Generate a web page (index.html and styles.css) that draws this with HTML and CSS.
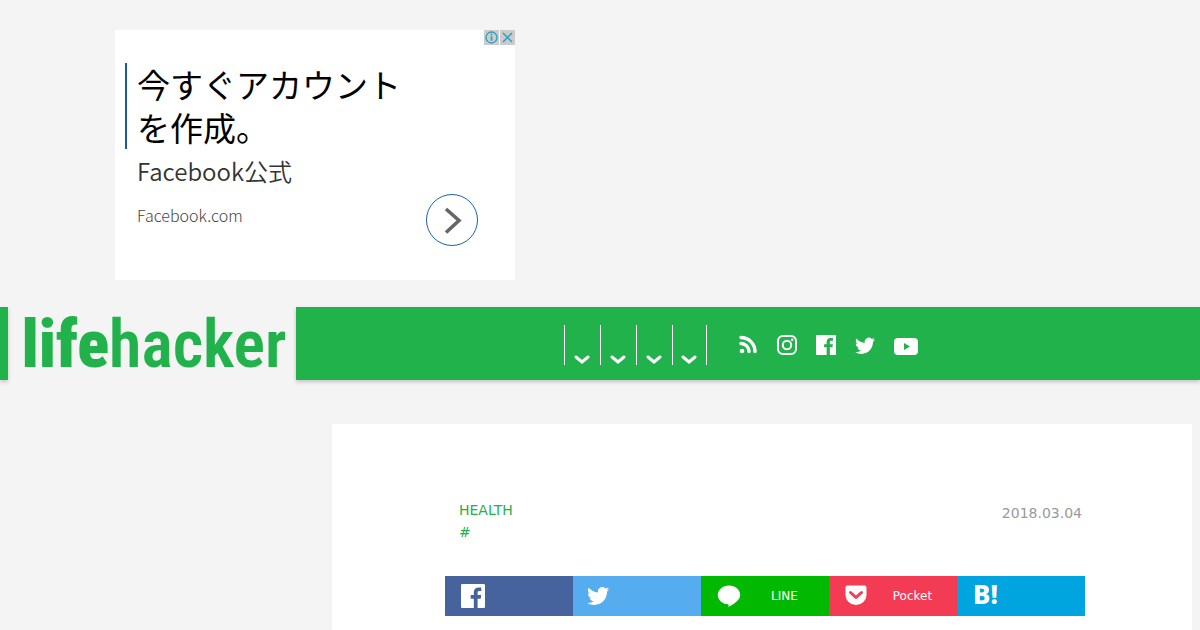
FILE: index.html
```html
<!DOCTYPE html>
<html lang="ja">
<head>
    <meta charset="UTF-8">
    <meta name="viewport" content="width=device-width, initial-scale=1.0">
    <title>lifehacker</title>
    <link rel="stylesheet" href="styles.css">
</head>

<body>
    <aside class="ad">
        <div class="ad-choices">
            <button type="button" aria-label="広告について">
                <svg width="15" height="15" viewBox="0 0 15 15" fill="none" stroke="#2a9fbf">
                    <circle cx="7.5" cy="7.5" r="5.5" stroke-width="1.3"/>
                    <path d="M7.5 6.3v4.5M7.5 3.8v1.5" stroke-width="1.6"/>
                </svg>
            </button>
            <button type="button" aria-label="広告を閉じる">
                <svg width="15" height="15" viewBox="0 0 15 15" fill="none" stroke="#2a9fbf" stroke-width="1.5">
                    <path d="M3 3l9 9M12 3l-9 9"/>
                </svg>
            </button>
        </div>
        <h2 class="ad-title">今すぐアカウント<br>を作成。</h2>
        <p class="ad-name">Facebook公式</p>
        <div class="ad-bottom">
            <p class="ad-url">Facebook.com</p>
            <a href="#" class="ad-arrow" aria-label="開く">
                <svg width="50" height="50" viewBox="0 0 50 50" fill="none" stroke="#666" stroke-width="3.6">
                    <path d="M19 14l13 11.5L19 37.5"/>
                </svg>
            </a>
        </div>
    </aside>

    <header class="header">
        <div class="bar bar-left"></div>
        <a href="#" class="logo"><b>life</b>hacker</a>
        <div class="bar bar-main">
            <ul class="menu">
                <li><button type="button" aria-label="メニュー1"><svg width="16" height="10" viewBox="0 0 16 10"><path d="M2 2l6 5 6-5"/></svg></button></li>
                <li><button type="button" aria-label="メニュー2"><svg width="16" height="10" viewBox="0 0 16 10"><path d="M2 2l6 5 6-5"/></svg></button></li>
                <li><button type="button" aria-label="メニュー3"><svg width="16" height="10" viewBox="0 0 16 10"><path d="M2 2l6 5 6-5"/></svg></button></li>
                <li><button type="button" aria-label="メニュー4"><svg width="16" height="10" viewBox="0 0 16 10"><path d="M2 2l6 5 6-5"/></svg></button></li>
            </ul>
            <nav class="social">
                <a href="#" aria-label="RSS">
                    <svg width="19" height="20" viewBox="0 0 19 20">
                        <circle cx="3" cy="16" r="2.3" fill="#fff"/>
                        <path d="M2 8.500a8 8 0 0 1 8 8M2 2.500a14 14 0 0 1 14 14" fill="none" stroke="#fff" stroke-width="3.4" stroke-linecap="round"/>
                    </svg>
                </a>
                <a href="#" aria-label="Instagram">
                    <svg width="20" height="20" viewBox="0 0 20 20" fill="none" stroke="#fff" stroke-width="2">
                        <rect x="1" y="1" width="18" height="18" rx="5"/>
                        <circle cx="10" cy="10" r="4.2"/>
                        <circle cx="15.2" cy="4.8" r="1.2" fill="#fff" stroke="none"/>
                    </svg>
                </a>
                <a href="#" aria-label="Facebook">
                    <svg width="20" height="20" viewBox="0 0 24 24" fill="#fff">
                        <path d="M22.700 0H1.300C.6 0 0 .6 0 1.300v21.400c0 .7.6 1.300 1.300 1.300h11.500v-9.300H9.700v-3.600h3.100V8.400c0-3.100 1.900-4.800 4.700-4.800 1.300 0 2.500.1 2.800.1V7h-1.900c-1.500 0-1.800.7-1.800 1.800v2.300h3.600l-.5 3.600h-3.100V24h6.100c.7 0 1.300-.6 1.300-1.300V1.300c0-.7-.6-1.300-1.300-1.300z"/>
                    </svg>
                </a>
                <a href="#" aria-label="Twitter">
                    <svg width="20" height="20" viewBox="0 -1 24 24" fill="#fff">
                        <path d="M23.950 4.570a10 10 0 0 1-2.820.77 4.960 4.960 0 0 0 2.160-2.720c-.95.55-2 .95-3.130 1.180a4.920 4.920 0 0 0-8.380 4.480C7.690 8.090 4.070 6.130 1.640 3.160a4.820 4.820 0 0 0-.67 2.480c0 1.710.87 3.210 2.190 4.100a4.900 4.900 0 0 1-2.230-.62v.06a4.920 4.920 0 0 0 3.950 4.830 5 5 0 0 1-2.210.08 4.940 4.940 0 0 0 4.600 3.420A9.870 9.870 0 0 1 0 19.540a13.990 13.990 0 0 0 7.550 2.210c9.050 0 14-7.500 14-13.980 0-.21 0-.42-.02-.63a9.940 9.940 0 0 0 2.460-2.550z"/>
                    </svg>
                </a>
                <a href="#" aria-label="YouTube">
                    <svg width="24" height="20" viewBox="0 0 24 20">
                        <rect x="0" y="3" width="24" height="17" rx="4" fill="#fff"/>
                        <path d="M10 8v7l6-3.500z" fill="#22b24c"/>
                    </svg>
                </a>
            </nav>
        </div>
    </header>

    <main class="article">
        <div class="meta">
            <div class="tags">
                <a href="#">HEALTH</a>
                <a href="#">#</a>
            </div>
            <time datetime="2018-03-04">2018.03.04</time>
        </div>
        <div class="share">
            <a href="#" class="share-item facebook" aria-label="Facebook">
                <svg width="24" height="24" viewBox="0 0 24 24" fill="#fff">
                    <path d="M22.700 0H1.300C.6 0 0 .6 0 1.300v21.400c0 .7.6 1.300 1.300 1.300h11.500v-9.300H9.700v-3.600h3.100V8.400c0-3.100 1.900-4.800 4.700-4.800 1.300 0 2.500.1 2.800.1V7h-1.900c-1.500 0-1.800.7-1.800 1.800v2.300h3.600l-.5 3.600h-3.100V24h6.100c.7 0 1.300-.6 1.300-1.300V1.300c0-.7-.6-1.300-1.300-1.300z"/>
                </svg>
            </a>
            <a href="#" class="share-item twitter" aria-label="Twitter">
                <svg width="24" height="24" viewBox="2 -1 26 26" fill="#fff" overflow="visible">
                    <path d="M23.950 4.570a10 10 0 0 1-2.820.77 4.960 4.960 0 0 0 2.160-2.720c-.95.55-2 .95-3.130 1.180a4.920 4.920 0 0 0-8.380 4.480C7.690 8.090 4.070 6.130 1.640 3.160a4.820 4.820 0 0 0-.67 2.480c0 1.710.87 3.210 2.190 4.100a4.900 4.900 0 0 1-2.230-.62v.06a4.920 4.920 0 0 0 3.950 4.830 5 5 0 0 1-2.210.08 4.940 4.940 0 0 0 4.600 3.420A9.870 9.870 0 0 1 0 19.540a13.990 13.990 0 0 0 7.550 2.210c9.050 0 14-7.500 14-13.980 0-.21 0-.42-.02-.63a9.940 9.940 0 0 0 2.460-2.550z"/>
                </svg>
            </a>
            <a href="#" class="share-item line">
                <svg width="24" height="24" viewBox="0 0 24 24" fill="#fff">
                    <path d="M12 1.500c6.200 0 11.200 4.200 11.200 9.400 0 5-5.600 8.600-11.800 12.100.4-1.400.3-2.700-.4-2.800C5.400 19.800.8 16 .8 10.900c0-5.200 5-9.400 11.200-9.400z"/>
                </svg>
                <span>LINE</span>
            </a>
            <a href="#" class="share-item pocket">
                <svg width="24" height="24" viewBox="0 0 24 24">
                    <path d="M2.500 1.500h17a2 2 0 0 1 2 2V11a10.500 10 0 0 1-21 0V3.500a2 2 0 0 1 2-2z" fill="#fff"/>
                    <path d="M5.500 8.500l5.500 5 5.500-5" fill="none" stroke="#ef3e56" stroke-width="3" stroke-linecap="round" stroke-linejoin="round"/>
                </svg>
                <span>Pocket</span>
            </a>
            <a href="#" class="share-item hatena"><b>B!</b></a>
        </div>
    </main>
</body>
</html>
```
FILE: styles.css
```css
* {
    margin: 0;
    padding: 0;
    box-sizing: border-box;
}

body {
    font-family: "DejaVu Sans", "Noto Sans CJK JP", sans-serif;
    background-color: #f4f4f4;
}

a {
    text-decoration: none;
}

button {
    border: none;
    background: none;
    cursor: pointer;
}

svg {
    display: block;
}

/* ad */
.ad {
    position: relative;
    width: 400px;
    min-height: 250px;
    margin: 30px 0 27px 115px;
    padding: 33px 37px 34px 10px;
    background-color: #fff;
    font-family: "Noto Sans CJK JP", sans-serif;
}

.ad-choices {
    position: absolute;
    top: 0;
    right: 0;
    display: flex;
    gap: 1px;
}

.ad-choices button {
    background-color: #ccc;
}

.ad-title {
    padding-left: 10px;
    border-left: 2px solid #1a5a9e;
    font-size: 33px;
    font-weight: 400;
    line-height: 43px;
    color: #000;
}

.ad-name {
    padding: 4px 12px 0;
    font-size: 24px;
    font-weight: 350;
    line-height: 36px;
    color: #333;
}

.ad-bottom {
    display: flex;
    justify-content: space-between;
    margin-top: 5px;
    padding-left: 12px;
}

.ad-url {
    padding-top: 9px;
    font-size: 16px;
    font-weight: 300;
    line-height: 24px;
    color: #444;
}

.ad-arrow {
    width: 52px;
    height: 52px;
    border: 1px solid #1c5fb0;
    border-radius: 50%;
}

/* header */
.header {
    display: flex;
    height: 73px;
}

.bar {
    background-color: #22b24c;
    box-shadow: 0 2px 4px rgba(0, 0, 0, 0.2);
}

.bar-left {
    width: 8px;
}

.bar-main {
    flex: 1;
    display: flex;
    justify-content: center;
    gap: 32px;
    padding: 18px 14px 15px 0;
}

.logo {
    width: 288px;
    padding-left: 4px;
    font-family: "Roboto Condensed", Roboto, sans-serif;
    font-size: 66px;
    font-weight: 600;
    line-height: 76px;
    text-align: center;
    color: #22b24c;
}

.logo b {
    font-weight: 900;
}

.menu {
    display: flex;
    list-style: none;
    border-right: 1px solid #fff;
}

.menu button {
    display: flex;
    align-items: flex-end;
    justify-content: center;
    width: 36px;
    height: 40px;
    padding-right: 1px;
    border-left: 1px solid #fff;
}

.menu li:last-child button {
    width: 34px;
}

.menu svg {
    fill: none;
    stroke: #fff;
    stroke-width: 3;
    stroke-linecap: round;
}

.social {
    display: flex;
    gap: 19px;
    padding-top: 10px;
}

/* article */
.article {
    margin: 44px 8px 0 332px;
    padding: 75px 107px 14px 113px;
    background-color: #fff;
}

.meta {
    display: flex;
    justify-content: space-between;
    padding: 0 3px 0 14px;
    font-size: 14px;
    line-height: 22px;
}

.tags a {
    display: block;
    color: #22b24c;
}

.meta time {
    padding-top: 3px;
    color: #999;
}

.share {
    display: flex;
    margin-top: 33px;
}

.share-item {
    flex: 1;
    display: flex;
    align-items: center;
    height: 40px;
    padding: 0 16px;
    font-size: 12px;
    color: #fff;
}

.share-item span {
    flex: 1;
    padding-left: 15px;
    text-align: center;
}

.facebook {
    background-color: #47639e;
}

.twitter {
    background-color: #55acee;
}

.line {
    background-color: #00b900;
}

.pocket {
    background-color: #f33b53;
}

.hatena {
    background-color: #00a4de;
}

.hatena b {
    padding-bottom: 4px;
    font-family: "Noto Sans", sans-serif;
    font-size: 26px;
    font-weight: 800;
    line-height: 36px;
}
```
